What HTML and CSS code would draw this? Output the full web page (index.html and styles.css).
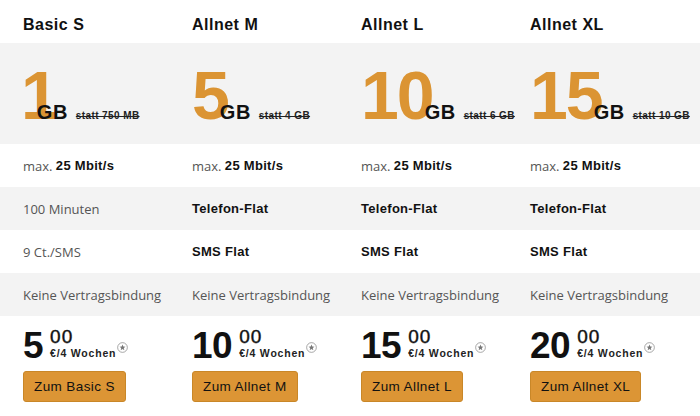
FILE: index.html
```html
<!DOCTYPE html>
<html lang="de">
<head>
<meta charset="utf-8">
<title>Tarife</title>
<link rel="stylesheet" href="styles.css">
</head>
<body>
<div class="table">
  <div class="row head">
    <div class="cell">Basic S</div>
    <div class="cell">Allnet M</div>
    <div class="cell">Allnet L</div>
    <div class="cell">Allnet XL</div>
  </div>
  <div class="row volume gray">
    <div class="cell"><span class="big narrow">1</span><span class="gb">GB</span><span class="statt">statt 750 MB</span></div>
    <div class="cell"><span class="big">5</span><span class="gb">GB</span><span class="statt">statt 4 GB</span></div>
    <div class="cell"><span class="big">10</span><span class="gb">GB</span><span class="statt">statt 6 GB</span></div>
    <div class="cell"><span class="big">15</span><span class="gb">GB</span><span class="statt">statt 10 GB</span></div>
  </div>
  <div class="row feat">
    <div class="cell">max. <b>25 Mbit/s</b></div>
    <div class="cell">max. <b>25 Mbit/s</b></div>
    <div class="cell">max. <b>25 Mbit/s</b></div>
    <div class="cell">max. <b>25 Mbit/s</b></div>
  </div>
  <div class="row feat gray">
    <div class="cell">100 Minuten</div>
    <div class="cell"><b>Telefon-Flat</b></div>
    <div class="cell"><b>Telefon-Flat</b></div>
    <div class="cell"><b>Telefon-Flat</b></div>
  </div>
  <div class="row feat">
    <div class="cell">9 Ct./SMS</div>
    <div class="cell"><b>SMS Flat</b></div>
    <div class="cell"><b>SMS Flat</b></div>
    <div class="cell"><b>SMS Flat</b></div>
  </div>
  <div class="row feat gray">
    <div class="cell">Keine Vertragsbindung</div>
    <div class="cell">Keine Vertragsbindung</div>
    <div class="cell">Keine Vertragsbindung</div>
    <div class="cell">Keine Vertragsbindung</div>
  </div>
  <div class="row prices">
    <div class="cell">
      <div class="price"><span class="int">5</span><span class="dec"><span class="cents">00</span><span class="per">€/4 Wochen<svg class="star" viewBox="0 0 12 12"><circle cx="6" cy="6" r="5.3"/><path d="M6 2.8 6.9 5 9.2 5.1 7.4 6.6 8 8.9 6 7.6 4 8.9 4.6 6.6 2.8 5.1 5.1 5Z"/></svg></span></span></div>
      <button class="btn">Zum Basic S</button>
    </div>
    <div class="cell">
      <div class="price"><span class="int">10</span><span class="dec"><span class="cents">00</span><span class="per">€/4 Wochen<svg class="star" viewBox="0 0 12 12"><circle cx="6" cy="6" r="5.3"/><path d="M6 2.8 6.9 5 9.2 5.1 7.4 6.6 8 8.9 6 7.6 4 8.9 4.6 6.6 2.8 5.1 5.1 5Z"/></svg></span></span></div>
      <button class="btn">Zum Allnet M</button>
    </div>
    <div class="cell">
      <div class="price"><span class="int">15</span><span class="dec"><span class="cents">00</span><span class="per">€/4 Wochen<svg class="star" viewBox="0 0 12 12"><circle cx="6" cy="6" r="5.3"/><path d="M6 2.8 6.9 5 9.2 5.1 7.4 6.6 8 8.9 6 7.6 4 8.9 4.6 6.6 2.8 5.1 5.1 5Z"/></svg></span></span></div>
      <button class="btn">Zum Allnet L</button>
    </div>
    <div class="cell">
      <div class="price"><span class="int">20</span><span class="dec"><span class="cents">00</span><span class="per">€/4 Wochen<svg class="star" viewBox="0 0 12 12"><circle cx="6" cy="6" r="5.3"/><path d="M6 2.8 6.9 5 9.2 5.1 7.4 6.6 8 8.9 6 7.6 4 8.9 4.6 6.6 2.8 5.1 5.1 5Z"/></svg></span></span></div>
      <button class="btn">Zum Allnet XL</button>
    </div>
  </div>
</div>
</body>
</html>
```
FILE: styles.css
```css
* { box-sizing: border-box; }
html, body { margin: 0; padding: 0; background: #fff; }
body { font-family: "Open Sans", "Liberation Sans", sans-serif; color: #555; width: 700px; height: 416px; overflow: hidden; }

.table { display: flex; flex-direction: column; }
.row { display: grid; grid-template-columns: 169px 169px 169px 1fr; }
.cell { padding-left: 23px; }
.gray { background: #f3f3f3; }

b, .head, .gb, .statt, .int, .cents, .per, .btn { font-family: "Liberation Sans", Arial, sans-serif; }

.head { height: 43px; padding-top: 15px; font-weight: 700; font-size: 16px; line-height: 20px; color: #111; letter-spacing: 0.5px; }

.volume { height: 101px; padding-top: 18px; }
.volume .cell { display: flex; align-items: baseline; white-space: nowrap; }
.big { font-family: "Liberation Sans", Arial, sans-serif; font-weight: 700; font-size: 68px; line-height: 1; color: #db9433; letter-spacing: -2px; }
.big.narrow { margin-left: -2px; margin-right: -12px; }
.gb { font-weight: 700; font-size: 20px; color: #111; margin-left: -8px; letter-spacing: 0.5px; }
.statt { font-size: 10px; font-weight: 700; color: #222; margin-left: 8px; text-decoration: line-through; letter-spacing: 0.4px; }

.feat { height: 43px; }
.feat .cell { display: flex; align-items: center; font-size: 13px; white-space: pre; }
.feat b { font-weight: 700; color: #111; letter-spacing: 0.3px; }

.prices { padding-top: 11px; height: 98px; }
.price { display: flex; align-items: flex-start; }
.int { font-weight: 700; font-size: 37px; line-height: 1; color: #111; letter-spacing: -0.5px; }
.dec { display: flex; flex-direction: column; margin-left: 7px; padding-top: 2px; }
.cents { font-size: 19px; line-height: 16px; color: #111; font-weight: 400; letter-spacing: 1px; -webkit-text-stroke: 0.4px #111; }
.per { font-size: 10.5px; font-weight: 700; color: #222; line-height: 13px; margin-top: 2px; letter-spacing: 0.8px; display: flex; align-items: flex-start; }
.star { width: 11px; height: 11px; margin-left: 1px; margin-top: -5px; fill: none; stroke: #777; stroke-width: 0.7; }
.star path { fill: #777; stroke: none; }

.btn { margin-top: 7px; height: 31px; padding: 0 10px; background: #dc9535; border: 1px solid #c98728; border-radius: 3px; font-size: 13.5px; color: #111; letter-spacing: 0.4px; cursor: pointer; }
```
